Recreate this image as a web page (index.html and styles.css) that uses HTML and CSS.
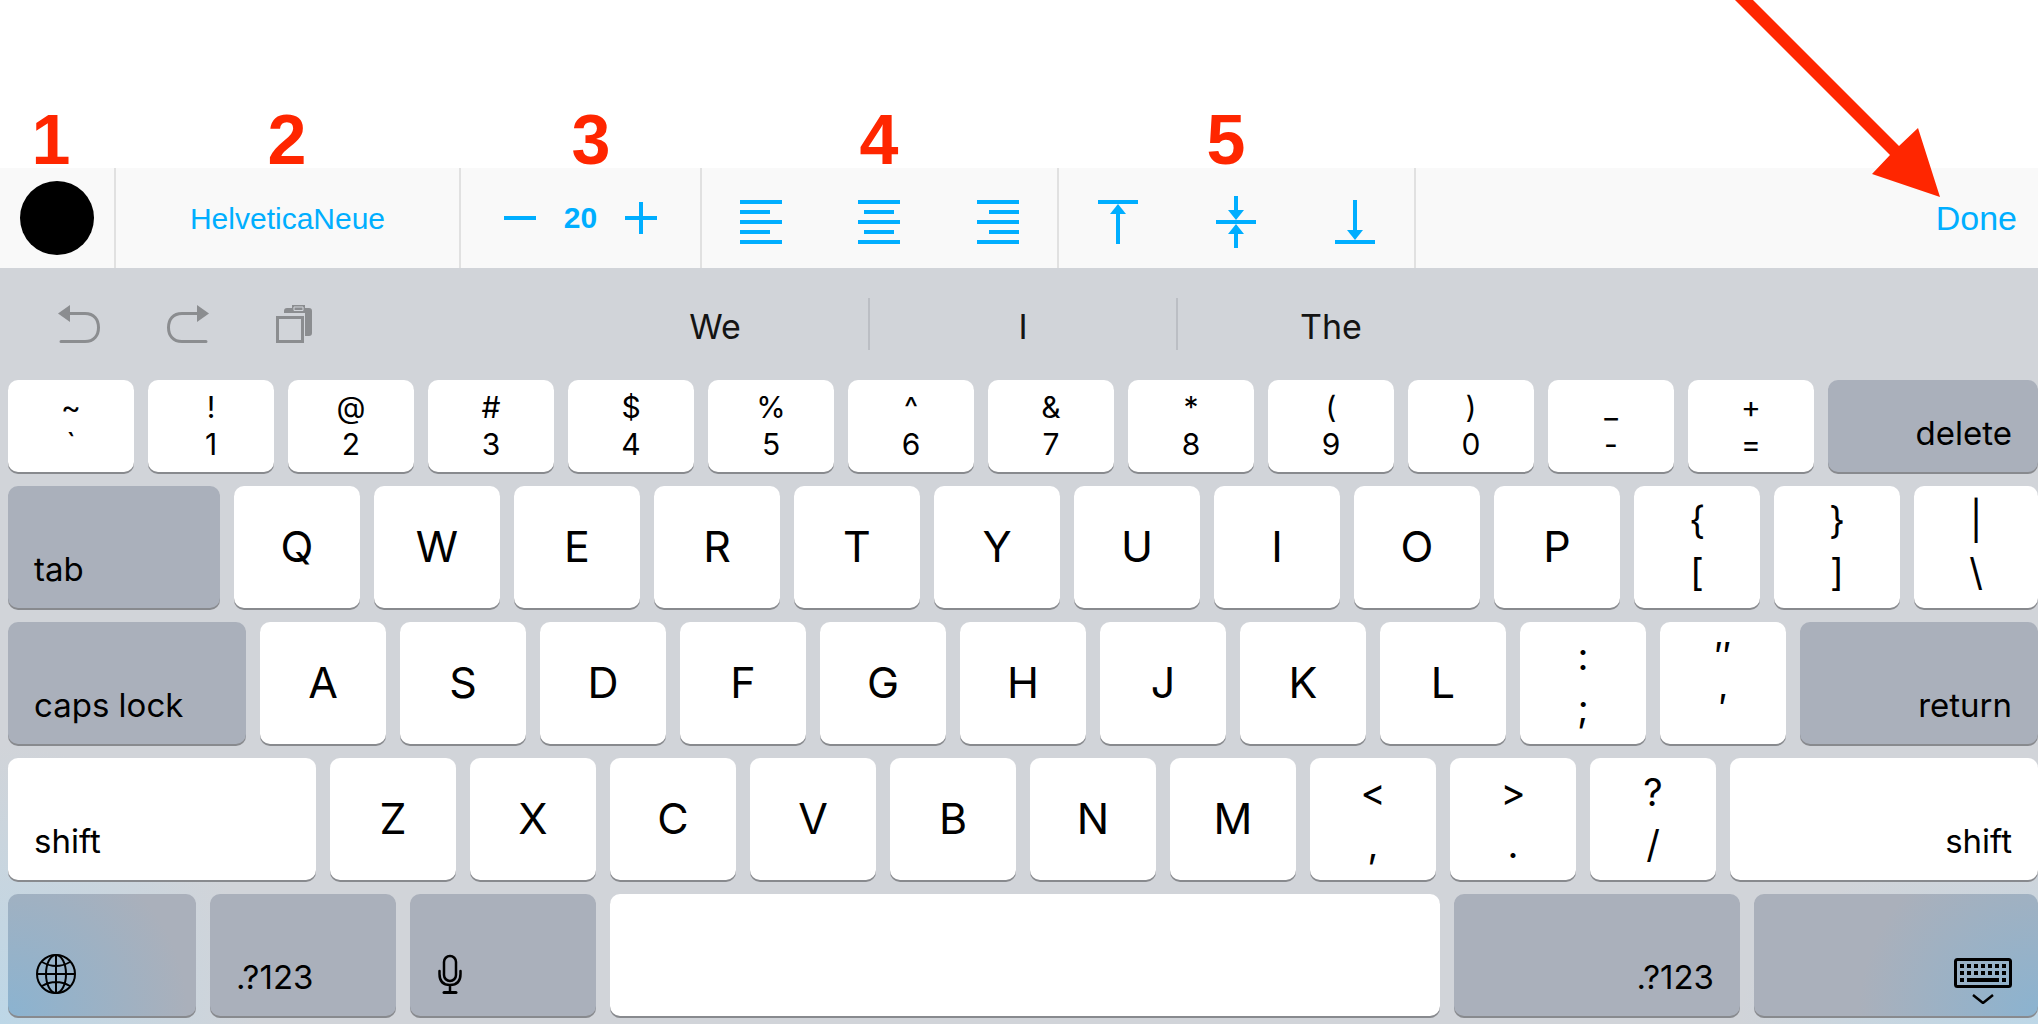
FILE: index.html
```html
<!DOCTYPE html>
<html lang="en">
<head>
    <meta charset="UTF-8">
    <meta name="viewport" content="width=device-width, initial-scale=1.0">
    <title>Text Formatting Toolbar</title>
    <link rel="stylesheet" href="styles.css">
</head>
<body>
    <!-- Canvas with callouts -->
    <div class="canvas">
        <div class="callouts">
            <span class="callout one">1</span>
            <span class="callout two">2</span>
            <span class="callout three">3</span>
            <span class="callout four">4</span>
            <span class="callout five">5</span>
        </div>
        <svg class="arrow" width="207" height="198" viewBox="0 0 207 198">
            <path d="M1 0H19L165 146L184 128L206 197L138 174L156 155Z" fill="#ff2600"/>
        </svg>
    </div>

    <!-- Formatting toolbar -->
    <div class="toolbar">
        <div class="group color-group">
            <button class="color" aria-label="Text color"></button>
        </div>
        <div class="group font-group">
            <button class="font-name">HelveticaNeue</button>
        </div>
        <div class="group size-group">
            <button aria-label="Smaller">
                <svg width="32" height="32" viewBox="0 0 32 32"><path d="M0 16H32" stroke="currentColor" stroke-width="4"/></svg>
            </button>
            <span class="size">20</span>
            <button aria-label="Larger">
                <svg width="32" height="32" viewBox="0 0 32 32"><path d="M0 16H32M16 0V32" stroke="currentColor" stroke-width="4"/></svg>
            </button>
        </div>
        <div class="group align-group">
            <button aria-label="Align left">
                <svg width="42" height="52" viewBox="0 0 42 52"><path d="M0 6H42M0 16H30M0 26H42M0 36H30M0 46H42" stroke="currentColor" stroke-width="4"/></svg>
            </button>
            <button aria-label="Align center">
                <svg width="42" height="52" viewBox="0 0 42 52"><path d="M0 6H42M6 16H36M0 26H42M6 36H36M0 46H42" stroke="currentColor" stroke-width="4"/></svg>
            </button>
            <button aria-label="Align right">
                <svg width="42" height="52" viewBox="0 0 42 52"><path d="M0 6H42M12 16H42M0 26H42M12 36H42M0 46H42" stroke="currentColor" stroke-width="4"/></svg>
            </button>
        </div>
        <div class="group align-group">
            <button aria-label="Align top">
                <svg width="40" height="52" viewBox="0 0 40 52"><path d="M0 6H40M20 16V48" stroke="currentColor" stroke-width="4"/><path d="M20 8L28 18H12Z" fill="currentColor"/></svg>
            </button>
            <button aria-label="Align middle">
                <svg width="40" height="52" viewBox="0 0 40 52"><path d="M0 26H40M20 0V16M20 36V52" stroke="currentColor" stroke-width="4"/><path d="M20 24L12 14H28ZM20 28L28 38H12Z" fill="currentColor"/></svg>
            </button>
            <button aria-label="Align bottom">
                <svg width="40" height="52" viewBox="0 0 40 52"><path d="M0 46H40M20 4V36" stroke="currentColor" stroke-width="4"/><path d="M20 44L12 34H28Z" fill="currentColor"/></svg>
            </button>
        </div>
        <button class="done">Done</button>
    </div>

    <!-- Keyboard -->
    <div class="keyboard">
        <div class="suggestions">
            <div class="edit-tools">
                <button aria-label="Undo">
                    <svg width="42" height="38" viewBox="0 0 42 38"><path d="M0 8.500L12 0V17Z" fill="currentColor"/><path d="M12 8.500H27C36 8.500 40.500 14.500 40.500 22.500S36 36.500 27 36.500H3" fill="none" stroke="currentColor" stroke-width="3" stroke-linecap="round"/></svg>
                </button>
                <button aria-label="Redo">
                    <svg width="42" height="38" viewBox="0 0 42 38"><path d="M42 8.500L30 0V17Z" fill="currentColor"/><path d="M30 8.500H15C6 8.500 1.500 14.500 1.500 22.500S6 36.500 15 36.500H39" fill="none" stroke="currentColor" stroke-width="3" stroke-linecap="round"/></svg>
                </button>
                <button aria-label="Paste">
                    <svg width="36" height="38" viewBox="0 0 36 38"><path d="M8 8V6Q8 3 11 3H16V0H29V3H33Q36 3 36 6V28Q36 31 33 31H29V8Z" fill="currentColor"/><path d="M18 2H27V5.500H18Z" fill="none" stroke="#d1d4d9" stroke-width="1"/><path d="M1.500 12.500H26.500V36.500H1.500Z" fill="none" stroke="currentColor" stroke-width="3"/></svg>
                </button>
            </div>
            <div class="words">
                <button>We</button>
                <button>I</button>
                <button>The</button>
            </div>
        </div>

        <div class="row numbers">
            <button class="key pair"><span>~</span><span>`</span></button>
            <button class="key pair"><span>!</span><span>1</span></button>
            <button class="key pair"><span>@</span><span>2</span></button>
            <button class="key pair"><span>#</span><span>3</span></button>
            <button class="key pair"><span>$</span><span>4</span></button>
            <button class="key pair"><span>%</span><span>5</span></button>
            <button class="key pair"><span>^</span><span>6</span></button>
            <button class="key pair"><span>&amp;</span><span>7</span></button>
            <button class="key pair"><span>*</span><span>8</span></button>
            <button class="key pair"><span>(</span><span>9</span></button>
            <button class="key pair"><span>)</span><span>0</span></button>
            <button class="key pair"><span>_</span><span>-</span></button>
            <button class="key pair"><span>+</span><span>=</span></button>
            <button class="key label dark right delete">delete</button>
        </div>

        <div class="row">
            <button class="key label dark tab">tab</button>
            <button class="key">Q</button>
            <button class="key">W</button>
            <button class="key">E</button>
            <button class="key">R</button>
            <button class="key">T</button>
            <button class="key">Y</button>
            <button class="key">U</button>
            <button class="key">I</button>
            <button class="key">O</button>
            <button class="key">P</button>
            <button class="key pair"><span>{</span><span>[</span></button>
            <button class="key pair"><span>}</span><span>]</span></button>
            <button class="key pair backslash"><span>|</span><span>\</span></button>
        </div>

        <div class="row">
            <button class="key label dark caps">caps lock</button>
            <button class="key">A</button>
            <button class="key">S</button>
            <button class="key">D</button>
            <button class="key">F</button>
            <button class="key">G</button>
            <button class="key">H</button>
            <button class="key">J</button>
            <button class="key">K</button>
            <button class="key">L</button>
            <button class="key pair"><span>:</span><span>;</span></button>
            <button class="key pair"><span>″</span><span>′</span></button>
            <button class="key label dark right caps">return</button>
        </div>

        <div class="row">
            <button class="key label shift">shift</button>
            <button class="key">Z</button>
            <button class="key">X</button>
            <button class="key">C</button>
            <button class="key">V</button>
            <button class="key">B</button>
            <button class="key">N</button>
            <button class="key">M</button>
            <button class="key pair"><span>&lt;</span><span>,</span></button>
            <button class="key pair"><span>&gt;</span><span>.</span></button>
            <button class="key pair"><span>?</span><span>/</span></button>
            <button class="key label right shift">shift</button>
        </div>

        <div class="row">
            <button class="key label dark icon globe" aria-label="Next keyboard">
                <svg width="40" height="40" viewBox="0 0 40 40" fill="none" stroke="currentColor" stroke-width="2"><circle cx="20" cy="20" r="19"/><ellipse cx="20" cy="20" rx="10" ry="19"/><path d="M20 1V39M1 20H39M6 8Q20 16 34 8M6 32Q20 24 34 32"/></svg>
            </button>
            <button class="key label dark mode">.?123</button>
            <button class="key label dark icon mode" aria-label="Dictate">
                <svg width="24" height="40" viewBox="0 0 24 40" fill="none" stroke="currentColor" stroke-width="2.500" stroke-linecap="round"><rect x="6" y="2" width="12" height="25" rx="6"/><path d="M1.500 17V20C1.500 27 5 31 12 31S22.500 27 22.500 20V17M12 31V38"/><path d="M6 38.500H18" stroke-width="3"/></svg>
            </button>
            <button class="key space" aria-label="Space"></button>
            <button class="key label dark right mode-right">.?123</button>
            <button class="key label dark right icon hide" aria-label="Hide keyboard">
                <svg width="58" height="48" viewBox="0 0 58 48" fill="none" stroke="currentColor"><rect x="1.500" y="3.500" width="55" height="27" rx="2" stroke-width="3"/><path d="M6 10H53M6 17H53" stroke-width="4" stroke-dasharray="4 3"/><path d="M6 24H10M13 24H45M48 24H52" stroke-width="4"/><path d="M19 39L29 47L39 39" stroke-width="2.500"/></svg>
            </button>
        </div>
    </div>
</body>
</html>
```
FILE: styles.css
```css
* {
    box-sizing: border-box;
}
body {
    margin: 0;
    background: #fff;
    color: #000;
    font-family: Inter, 'Liberation Sans', sans-serif;
    overflow-x: hidden;
}
button {
    margin: 0;
    padding: 0;
    border: none;
    background: none;
    color: inherit;
    font: inherit;
    cursor: pointer;
}
svg {
    display: block;
}

/* Canvas */
.canvas {
    position: relative;
    padding-top: 112px;
}
.callouts {
    display: flex;
}
.callout {
    color: #ff2600;
    font-family: 'Liberation Sans', Arial, sans-serif;
    font-size: 70px;
    font-weight: bold;
    line-height: 56px;
    text-align: center;
}
.one {
    width: 102px;
}
.two {
    width: 370px;
}
.three {
    width: 238px;
}
.four {
    width: 338px;
}
.five {
    width: 356px;
}
.arrow {
    position: absolute;
    top: 0;
    right: 97px;
    z-index: 1;
}

/* Toolbar */
.toolbar {
    display: flex;
    height: 100px;
    background: #f9f9f9;
    color: #00aeff;
    font-family: 'Liberation Sans', Arial, sans-serif;
    font-size: 30px;
}
.group {
    display: flex;
    align-items: center;
    justify-content: center;
    border-right: 2px solid #e1e1e1;
}
.color-group {
    width: 116px;
}
.font-group {
    width: 345px;
    padding-top: 2px;
}
.size-group {
    width: 241px;
    gap: 28px;
}
.size {
    font-weight: bold;
}
.align-group {
    width: 357px;
    padding-top: 8px;
}
.align-group button {
    display: flex;
    flex: 1;
    justify-content: center;
}
.color {
    width: 74px;
    height: 74px;
    border-radius: 50%;
    background: #000;
}
.done {
    margin-left: auto;
    padding: 0 21px;
    font-size: 34px;
}

/* Keyboard */
.keyboard {
    padding: 0 0 8px 8px;
    background:
        radial-gradient(ellipse 260px 280px at 0 100%, #bdd7e7, rgba(209, 212, 217, 0)),
        radial-gradient(ellipse 300px 180px at 100% 100%, #bdd7e7, rgba(209, 212, 217, 0)),
        #d1d4d9;
}
.suggestions {
    display: grid;
    grid-template-columns: 1fr 922px 1fr;
    align-items: center;
    height: 112px;
}
.edit-tools {
    display: flex;
    gap: 67px;
    padding-left: 50px;
    color: #8b8d90;
}
.words {
    display: flex;
    color: #141414;
    font-size: 34px;
}
.words button {
    flex: 1;
    padding-top: 6px;
    line-height: 46px;
}
.words button + button {
    border-left: 2px solid #bbbec4;
}
.row {
    display: flex;
    gap: 14px;
    height: 122px;
    margin-bottom: 14px;
}
.row:last-child {
    margin-bottom: 0;
}
.key {
    flex: 126 1 126px;
    min-width: 0;
    padding-bottom: 2px;
    border-radius: 10px;
    background: #fff;
    box-shadow: 0 2px 0 #888a8e;
    font-size: 43px;
}
.pair {
    display: flex;
    flex-direction: column;
    align-items: center;
    justify-content: center;
    font-size: 38px;
    line-height: 52px;
}
.numbers {
    height: 92px;
}
.numbers .pair {
    padding-bottom: 0;
    font-size: 30px;
    line-height: 37px;
}
.label {
    display: flex;
    align-items: flex-end;
    padding: 0 26px 19px;
    font-size: 33px;
    line-height: 40px;
}
.right {
    justify-content: flex-end;
}
.dark {
    background-color: #aab0bb;
}
.icon {
    padding-bottom: 22px;
    padding-left: 28px;
}
.delete {
    flex: 210 1 210px;
}
.tab {
    flex: 212 1 212px;
}
.backslash {
    flex: 124 1 124px;
}
.caps {
    flex: 238 1 238px;
}
.shift {
    flex: 308 1 308px;
}
.globe {
    flex: 188 1 188px;
    background-image: radial-gradient(circle at 0 100%, #8bb3d0, rgba(170, 176, 187, 0) 180px);
}
.mode {
    flex: 186 1 186px;
}
.space {
    flex: 830 1 830px;
}
.mode-right {
    flex: 286 1 286px;
}
.hide {
    flex: 284 1 284px;
    padding-bottom: 12px;
    background-image: radial-gradient(circle at 100% 100%, #8bb3d0, rgba(170, 176, 187, 0) 180px);
}
```
